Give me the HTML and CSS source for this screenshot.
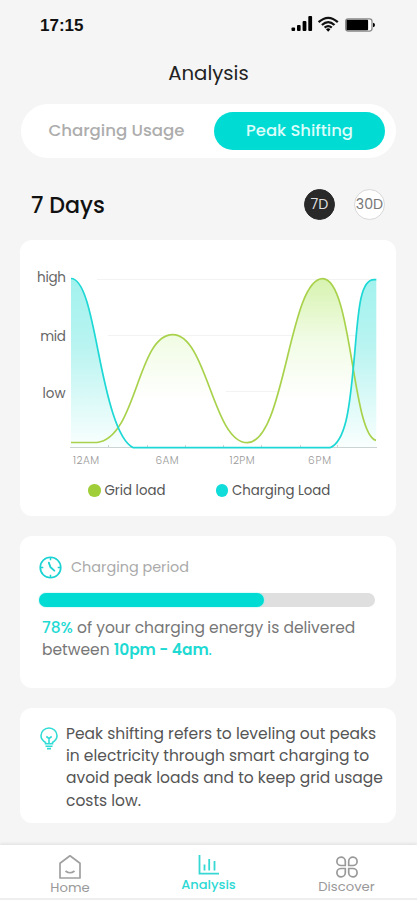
FILE: index.html
```html
<!DOCTYPE html>
<html lang="en">
<head>
<meta charset="utf-8">
<title>Analysis</title>
<link rel="stylesheet" href="styles.css">
</head>
<body>
<div class="status">
  <span class="time">17:15</span>
  <svg class="status-icons" width="84" height="18" viewBox="291 15 84 18">
    <g fill="#000"><rect x="291.5" y="27.5" width="3.6" height="3.5" rx="1"/><rect x="297" y="25" width="3.6" height="6" rx="1"/><rect x="302.6" y="21" width="3.8" height="10" rx="1"/><rect x="308.3" y="16" width="3.8" height="15" rx="1"/></g>
    <g fill="none" stroke="#111" stroke-width="2.3"><path d="M318.6 22.2Q328.2 13.5 337.8 22.2"/><path d="M321.9 25Q328.2 19.3 334.5 25"/><path d="M324.6 27.6Q328.2 24.6 331.8 27.6"/></g>
    <path d="M326 29.2Q328.2 27.5 330.4 29.2L328.2 31.7Z"/>
    <rect x="345.7" y="18.9" width="26.3" height="12.2" rx="2.5" fill="#fff" stroke="#888" stroke-width="1.3"/>
    <rect x="346.5" y="19.8" width="21.6" height="10.4" rx="1"/><path d="M373 22.7Q375 23 375 25T373 27.3Z"/>
  </svg>
</div>
<h1 class="title">Analysis</h1>
<div class="tabs"><div class="tab">Charging Usage</div><div class="tab active">Peak Shifting</div></div>
<div class="range"><h2>7 Days</h2><div class="chip dark">7D</div><div class="chip">30D</div></div>

<section class="card chart-card">
  <svg class="chart" width="376" height="230" viewBox="20 240 376 230">
    <defs>
      <linearGradient id="cyan" gradientUnits="userSpaceOnUse" x1="0" y1="279" x2="0" y2="448"><stop offset="0" stop-color="#a2f2ee"/><stop offset=".4" stop-color="#b9f4f1"/><stop offset="1" stop-color="#fafffe"/></linearGradient>
      <linearGradient id="green" gradientUnits="userSpaceOnUse" x1="0" y1="279" x2="0" y2="400"><stop offset="0" stop-color="#d7f3b0"/><stop offset=".5" stop-color="#f1fce5"/><stop offset="1" stop-color="#fff"/></linearGradient>
    </defs>
    <g stroke="#f3f3f3"><path d="M97 279.5H376M108 335.5H376M156 391.5H188M226 391.5H335"/></g>
    <path fill="url(#green)" d="M97 442.5C137 438 137 334.7 172.7 334.7C207 334.7 213 442.7 247.3 442.7C285 442.7 289 278.7 322.7 278.7C352 278.7 352 435 376 440.3V447H97Z"/>
    <path fill="url(#cyan)" d="M71 278.5C84 278.5 91 315 98.3 352C107 396 117 440 133.3 447.5H71Z"/>
    <path fill="url(#cyan)" d="M330 447.5C347 441 350 400 353.3 368C358 322 358 279.7 374 279.7H376.3V447.5Z"/>
    <path fill="none" stroke="#ccd3d3" d="M70 447.5H377M108.5 445V448M147.5 445V448M185.5 445V448M223.5 445V448M261.5 445V448M300.5 445V448M337.5 445V448"/>
    <path fill="none" stroke="#a9d24c" stroke-width="1.7" d="M71 442.5H97C137 438 137 334.7 172.7 334.7C207 334.7 213 442.7 247.3 442.7C285 442.7 289 278.7 322.7 278.7C352 278.7 352 435 376 440.3"/>
    <path fill="none" stroke="#1ed8d5" stroke-width="1.7" d="M71 278.5C84 278.5 91 315 98.3 352C107 396 117 440 133.3 447.7H330C347 441 350 400 353.3 368C358 322 358 279.7 374 279.7H376.3"/>
    <g class="y-labels"><text x="37" y="282" textLength="29">high</text><text x="40.3" y="341" textLength="25.5">mid</text><text x="42.5" y="398" textLength="23">low</text></g>
    <g class="x-labels"><text x="73" y="464" textLength="26">12AM</text><text x="155.5" y="464" textLength="23">6AM</text><text x="229.5" y="464" textLength="25">12PM</text><text x="308" y="464" textLength="23">6PM</text></g>
  </svg>
  <div class="legend"><span class="key grid">Grid load</span><span class="key charge">Charging Load</span></div>
</section>

<section class="card period">
  <div class="period-head">
    <svg width="23" height="23" viewBox="0 0 24 24" fill="none" stroke="#1cd3d3" stroke-width="1.8"><circle cx="12" cy="12" r="10.7"/><path stroke-width="1.6" d="M12 1.5V4.5M12 19.5V22.5M1.5 12H4.5M19.5 12H22.5"/><path stroke-width="2" stroke-linecap="round" d="M10.3 7L12 11.7L16 15.3"/></svg>
    <span>Charging period</span>
  </div>
  <div class="bar"><div class="fill"></div></div>
  <p><b>78%</b> of your charging energy is delivered<br>between <b class="hours">10pm - 4am</b><i>.</i></p>
</section>

<section class="card info">
  <svg width="18" height="23" viewBox="0 0 18 23" fill="none" stroke="#31dcd6" stroke-width="1.6"><path d="M5.5 16.8V15.5C3 13.8 1 12 1 8.7C1 4.5 4.5 1 9 1S17 4.5 17 8.7C17 12 15 13.8 12.5 15.5V16.8Z"/><path d="M5.5 19.2H12.5M7 21.6H11M9 16V11.5L6.3 9.5M9 11.5L11.7 9.5"/></svg>
  <p>Peak shifting refers to leveling out peaks<br>in electricity through smart charging to<br>avoid peak loads and to keep grid usage<br>costs low.</p>
</section>

<nav class="nav">
  <a class="home"><svg width="24" height="26" viewBox="0 0 24 26" fill="none" stroke="#a0a0a0" stroke-width="1.7"><path d="M2 9.2L12 1.8L22 9.2V24H2Z" stroke-linejoin="round"/><path d="M7.5 17Q12 20.5 16.5 17"/></svg><span>Home</span></a>
  <a class="analysis"><svg width="22" height="22" viewBox="0 0 22 22" fill="none" stroke="#36d8d4" stroke-width="1.8"><path d="M1.5 1V19.7H21M6.5 10.5V16.5M11.2 5V16.5M16.5 7V16.5"/></svg><span>Analysis</span></a>
  <a class="discover"><svg width="22" height="22" viewBox="0 0 22 22" fill="none" stroke="#999" stroke-width="1.7"><path d="M9.3 9.5H5.2A4.2 4.2 0 1 1 9.3 5.2ZM12.7 9.5V5.2A4.2 4.2 0 1 1 16.8 9.5ZM9.3 12.5V16.8A4.2 4.2 0 1 1 5.2 12.5ZM12.7 12.5H16.8A4.2 4.2 0 1 1 12.7 16.8Z"/></svg><span>Discover</span></a>
</nav>
</body>
</html>
```

FILE: styles.css
```css
* { box-sizing: border-box; }
body { margin: 0; width: 417px; height: 900px; overflow: hidden; display: flex; flex-direction: column; background: #f5f5f5; font-family: Poppins, Inter, sans-serif; color: #555; }
h1, h2, p { margin: 0; font-weight: 400; }
svg { display: block; flex: none; }
span, p { white-space: nowrap; }
.status { height: 50px; padding: 15px 42px 0 40px; display: flex; justify-content: space-between; align-items: flex-start; }
.time { font: 700 17px/22px "Liberation Sans", sans-serif; color: #111; }
.title { height: 54px; line-height: 46px; font-size: 19.7px; color: #222; text-align: center; }
.tabs { height: 54px; margin: 0 21px; padding: 8px 11px 8px 0; border-radius: 27px; background: #fff; display: flex; font-size: 16.6px; font-weight: 500; color: #adadad; }
.tab { width: 193px; height: 38px; line-height: 38px; padding-right: 2px; text-align: center; border-radius: 19px; }
.tab.active { width: 171px; padding: 0; background: #00dcd4; color: #dcfdfa; font-size: 16.4px; }
.range { height: 82px; padding: 10px 32px 0 31px; display: flex; align-items: center; }
h2 { flex: 1; padding-top: 2px; font-size: 22.2px; font-weight: 500; color: #111; white-space: nowrap; }
.chip { width: 31px; height: 31px; border: 1px solid #d8d8d8; border-radius: 50%; background: #fff; font-size: 14.2px; line-height: 29px; display: flex; justify-content: center; color: #777; }
.chip.dark { background: #292929; border-color: #292929; color: #ddd; margin-right: 19px; }
.card { margin: 0 21px 0 20px; border-radius: 12px; background: #fff; flex: none; }
.chart-card { height: 276px; }
.y-labels { font-size: 13.5px; fill: #666; }
.x-labels { font-size: 10.5px; font-weight: 300; fill: #999; }
.legend { display: flex; padding-left: 68px; margin-top: 10px; font-size: 13.3px; line-height: 21px; color: #555; }
.key { display: flex; align-items: center; gap: 4px; }
.key::before { content: ""; width: 12.5px; height: 12.5px; border-radius: 50%; background: #9fce38; }
.grid { width: 127.5px; }
.charge::before { background: #10dcda; }
.period { height: 152px; margin-top: 20px; padding: 20px 22px 0 19px; }
.period-head { display: flex; align-items: center; gap: 9px; height: 23px; font-size: 14.4px; color: #aaa; }
.bar { width: 336px; height: 14px; border-radius: 7px; background: #dfdfdf; margin-top: 14px; }
.fill { width: 225px; height: 14px; border-radius: 7px; background: #00dcd4; box-shadow: 0 0 2px #8aeeea; }
.period p { margin: 10px 0 0 3px; font-size: 15.5px; line-height: 22px; color: #777; }
b { font-weight: 500; color: #1fdad3; }
.hours { font-weight: 600; letter-spacing: -0.1px; }
i { font-style: normal; color: #1fdad3; }
.info { height: 115px; margin-top: 20px; padding: 15px 12px 0 20px; display: flex; gap: 8px; }
.info svg { margin-top: 4px; }
.info p { font-size: 15.5px; line-height: 22.2px; color: #555; }
.nav { height: 55px; margin-top: auto; background: #fff; border-bottom: 2px solid #eee; box-shadow: 0 -1px 3px #ddd; display: flex; flex: none; }
.nav a { width: 139px; display: flex; flex-direction: column; align-items: center; font-size: 13.2px; line-height: 18px; color: #999; }
.home { padding-top: 9px; padding-left: 1px; }
.home span { margin-top: -1px; }
.analysis { padding-top: 9px; }
.nav .analysis { color: #2dd9d4; font-weight: 500; font-size: 13px; }
.discover { padding-top: 11px; }
.discover svg { margin-right: 1px; }
.discover span { margin-right: 2px; }
```
